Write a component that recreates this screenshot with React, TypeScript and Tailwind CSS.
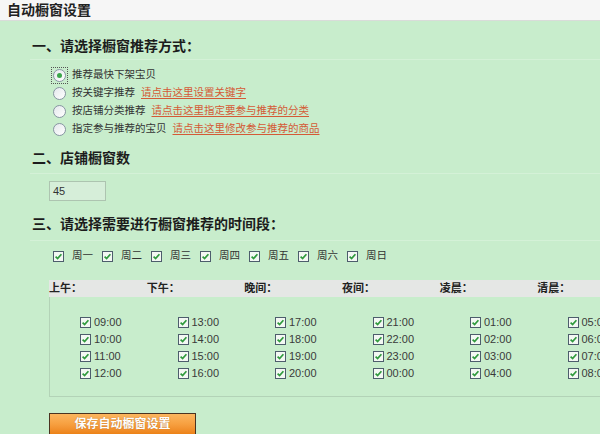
import React from "react";

const FONT = "font-['Liberation_Sans','Noto_Sans_CJK_SC',sans-serif]";

function Check() {
  return (
    <span className="flex h-[11px] w-[11px] shrink-0 items-center justify-center border border-[#4d5d6c] bg-[#f3f8f3]">
      <svg viewBox="0 0 9 9" className="h-[9px] w-[9px]">
        <path d="M1.6 4.6 L3.6 6.6 L7.4 2.2" fill="none" stroke="#2f9a3c" strokeWidth="1.7" />
      </svg>
    </span>
  );
}

function Radio({ checked, focused }: { checked?: boolean; focused?: boolean }) {
  return (
    <span
      className={`flex h-[17px] w-[17px] items-center justify-center border border-dotted ${
        focused ? "border-[#555]" : "border-transparent"
      }`}
    >
      <span className="flex h-[13px] w-[13px] items-center justify-center rounded-full border border-[#8795a2] bg-gradient-to-br from-[#e4e8ec] to-[#ffffff]">
        {checked && <span className="h-[5px] w-[5px] rounded-full bg-[#3aa64a]" />}
      </span>
    </span>
  );
}

const options = [
  { label: "推荐最快下架宝贝", link: "" },
  { label: "按关键字推荐", link: "请点击这里设置关键字" },
  { label: "按店铺分类推荐", link: "请点击这里指定要参与推荐的分类" },
  { label: "指定参与推荐的宝贝", link: "请点击这里修改参与推荐的商品" },
];

const days = ["周一", "周二", "周三", "周四", "周五", "周六", "周日"];

const periods = [
  { name: "上午：", hours: ["09:00", "10:00", "11:00", "12:00"] },
  { name: "下午：", hours: ["13:00", "14:00", "15:00", "16:00"] },
  { name: "晚间：", hours: ["17:00", "18:00", "19:00", "20:00"] },
  { name: "夜间：", hours: ["21:00", "22:00", "23:00", "00:00"] },
  { name: "凌晨：", hours: ["01:00", "02:00", "03:00", "04:00"] },
  { name: "清晨：", hours: ["05:00", "06:00", "07:00", "08:00"] },
];

export default function App() {
  return (
    <div className={`h-[434px] w-[600px] overflow-hidden bg-[#c8edcc] text-[#333] ${FONT}`}>
      {/* title bar */}
      <div className="flex h-[21px] items-center border-b border-[#d9dcd9] bg-[#f6f6f6] px-[7px] text-[14px] font-bold leading-none text-[#222]">
        自动橱窗设置
      </div>

      <div className="pl-[30px] pt-[15px]">
        {/* section 1 */}
        <div className="h-[20px] pl-[2px] text-[14px] font-bold leading-[20px] text-[#1c1c1c]">
          一、请选择橱窗推荐方式：
        </div>
        <div className="mt-[3px] border-t border-[#d4f1d7]" />
        <div className="mt-[6px] pl-[21px]">
          {options.map((o, i) => (
            <div key={o.label} className="flex h-[18px] items-center text-[10.5px]">
              <Radio checked={i === 0} focused={i === 0} />
              <span className="ml-[4px]">{o.label}</span>
              {o.link && (
                <span className="ml-[6px] text-[#d45a36] underline underline-offset-2">{o.link}</span>
              )}
            </div>
          ))}
        </div>

        {/* section 2 */}
        <div className="mt-[10px] h-[20px] pl-[2px] text-[14px] font-bold leading-[20px] text-[#1c1c1c]">
          二、店铺橱窗数
        </div>
        <div className="mt-[5px] border-t border-[#d4f1d7]" />
        <div className="ml-[19px] mt-[7px] flex h-[20px] w-[57px] items-center border border-[#adc4b0] bg-[#d6eed9] pl-[3px] text-[11px] text-[#333]">
          45
        </div>

        {/* section 3 */}
        <div className="mt-[13px] h-[20px] pl-[2px] text-[14px] font-bold leading-[20px] text-[#1c1c1c]">
          三、请选择需要进行橱窗推荐的时间段：
        </div>
        <div className="mt-[6px] border-t border-[#d4f1d7]" />
        <div className="mt-[7px] flex h-[16px] items-center pl-[23px] text-[10.5px]">
          {days.map((d) => (
            <div key={d} className="flex w-[49px] items-center gap-[8px]">
              <Check />
              <span>{d}</span>
            </div>
          ))}
        </div>

        {/* time table */}
        <div className="ml-[19px] mt-[16px] w-[586px]">
          <div className="grid h-[17px] grid-cols-6 items-center bg-[#e5e7e5] text-[11px] font-bold text-[#222]">
            {periods.map((p) => (
              <span key={p.name}>{p.name}</span>
            ))}
          </div>
          <div className="grid grid-cols-6 border-b border-l border-[#b3d3b7] pb-[14px] pt-[17px]">
            {periods.map((p) => (
              <div key={p.name} className="pl-[30px]">
                {p.hours.map((h) => (
                  <div key={h} className="flex h-[17px] items-center gap-[3px] text-[11px] text-[#3a3a3a]">
                    <Check />
                    <span>{h}</span>
                  </div>
                ))}
              </div>
            ))}
          </div>
        </div>

        <button className="ml-[19px] mt-[16px] flex h-[22px] w-[147px] items-center justify-center border border-[#4a3320] bg-gradient-to-b from-[#fbb65e] via-[#f7a040] to-[#ec8216] text-[12px] font-bold text-white [text-shadow:0_0_1px_rgba(120,60,0,0.6)]">
          保存自动橱窗设置
        </button>
      </div>
    </div>
  );
}
